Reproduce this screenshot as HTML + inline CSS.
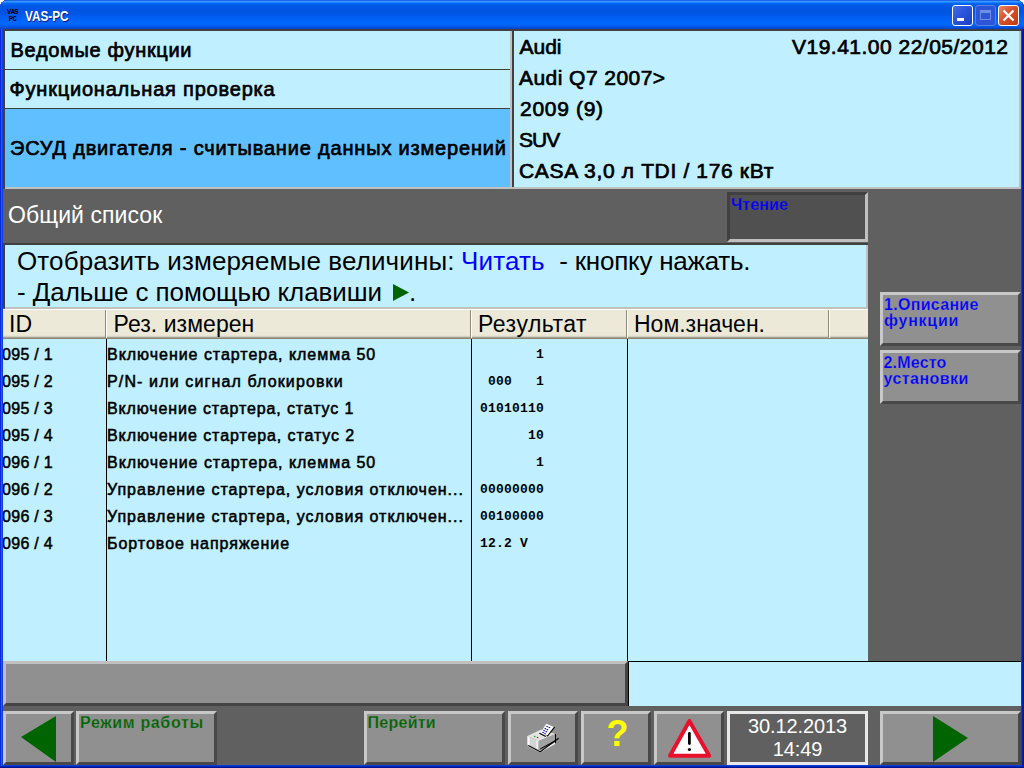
<!DOCTYPE html>
<html lang="ru">
<head>
<meta charset="utf-8">
<title>VAS-PC</title>
<style>
html,body{margin:0;padding:0;}
body{width:1024px;height:768px;overflow:hidden;position:relative;background:#fff;
 font-family:"Liberation Sans",sans-serif;color:#000;}
.abs{position:absolute;box-sizing:border-box;white-space:nowrap;}
pre.abs{white-space:pre;margin:0;}
#win{left:0;top:0;width:1024px;height:768px;background:#0a34d6;border-radius:8px 8px 0 0;box-shadow:inset 0 -1px 0 #001590,inset -1px 0 0 #001590,inset 0 -2px 0 #0028b8,inset -2px 0 0 #0020b0,inset 1px 0 0 #0a2ad8,inset 2px 0 0 #1a5ce8,inset 3px 0 0 #0a40dc,inset -3px 0 0 #0a3ce0,inset 0 -3px 0 #0a3ce0;}
#titlebar{left:0;top:0;width:1024px;height:29px;
 background:linear-gradient(to bottom,#0847d8 0px,#2c86fc 1px,#3c96ff 1.5px,#1a82ff 2.5px,#0468f6 3.5px,#005ae8 5px,#0055e2 9px,#0054e2 12px,#0059ea 15px,#0062f6 19px,#0068ff 23px,#0064f8 25px,#0054e4 27px,#0042cc 29px);
 border-radius:8px 8px 0 0;}
#title{left:24.5px;top:8px;font:bold 14px/16px "Liberation Sans",sans-serif;color:#fff;text-shadow:1px 1px 0 #0a1883;transform:scaleX(0.84);transform-origin:0 0;}
#client{left:3px;top:29px;width:1018px;height:736px;background:#606060;}
.cy{background:#c0f0ff;}
.hl{font:20px/22px "Liberation Sans",sans-serif;letter-spacing:0.7px;-webkit-text-stroke:0.7px #000;}
.hr{font:21px/24px "Liberation Sans",sans-serif;letter-spacing:0.3px;-webkit-text-stroke:0.7px #000;}
.btn{background:#909090;border-style:solid;border-width:3px;border-color:#c8c8c8 #484848 #484848 #c8c8c8;}
.bt{font:bold 16px/16px "Liberation Sans",sans-serif;letter-spacing:0.3px;-webkit-text-stroke:0.25px #909090;}
.cell{font:16px/18px "Liberation Sans",sans-serif;letter-spacing:0.97px;-webkit-text-stroke:0.55px #000;}
.id{font:16px/18px "Liberation Sans",sans-serif;letter-spacing:0.3px;-webkit-text-stroke:0.5px #000;}
.mono{font:bold 13px/14px "Liberation Mono",monospace;letter-spacing:0.2px;}
.ins{font:26px/31px "Liberation Sans",sans-serif;}
.th{font:23px/26px "Liberation Sans",sans-serif;}
.cb{width:21px;height:21px;top:5px;border:1px solid #fff;border-radius:3px;}
</style>
</head>
<body>
<div id="win" class="abs"></div>
<div id="titlebar" class="abs"></div>
<div class="abs" style="left:5px;top:9px;font:bold 7px/7px 'Liberation Mono',monospace;color:#000;text-align:center;width:15px;letter-spacing:-0.5px;">VAS<br>PC</div>
<div id="title" class="abs">VAS-PC</div>
<div class="abs cb" style="left:952px;background:linear-gradient(135deg,#3f6fe8 0%,#2a52d8 50%,#1c3fc0 100%);"></div>
<div class="abs" style="left:957px;top:18px;width:7px;height:3px;background:#fff;"></div>
<div class="abs cb" style="left:975px;background:#2d56d6;border-color:#5d7fe0;"></div>
<div class="abs" style="left:980px;top:10px;width:11px;height:10px;border:1px solid #6f8fe6;border-top-width:3px;"></div>
<div class="abs cb" style="left:998px;background:linear-gradient(135deg,#e8896a 0%,#d8502c 45%,#c23a10 100%);"></div>
<svg class="abs" style="left:998px;top:5px;" width="21" height="21" viewBox="0 0 21 21"><path d="M5.5 5.5 L15.5 15.5 M15.5 5.5 L5.5 15.5" stroke="#fff" stroke-width="2.2" stroke-linecap="butt" fill="none"/></svg>
<div id="client" class="abs"></div>

<!-- top panels -->
<div class="abs" style="left:3px;top:29px;width:1018px;height:160px;background:#404040;"></div>
<div class="abs" style="left:5px;top:187px;width:1016px;height:2px;background:#c0c0c0;"></div>
<div class="abs" style="left:1019px;top:31px;width:2px;height:158px;background:#c0c0c0;"></div>
<div class="abs cy" style="left:5px;top:31px;width:505px;height:38px;"></div>
<div class="abs cy" style="left:5px;top:70px;width:505px;height:38px;"></div>
<div class="abs" style="left:5px;top:109px;width:505px;height:78px;background:#60c0ff;"></div>
<div class="abs" style="left:510px;top:31px;width:2px;height:158px;background:#c0c0c0;"></div>
<div class="abs cy" style="left:514px;top:31px;width:505px;height:156px;"></div>

<div class="abs hl" style="left:10.5px;top:39px;letter-spacing:0.68px;">Ведомые функции</div>
<div class="abs hl" style="left:9.5px;top:78px;letter-spacing:0.8px;">Функциональная проверка</div>
<div class="abs hl" style="left:10px;top:136.5px;letter-spacing:0.82px;">ЭСУД двигателя - считывание данных измерений</div>

<div class="abs hr" style="left:519.5px;top:35px;letter-spacing:0px;">Audi</div>
<div class="abs hr" style="left:792px;top:35px;letter-spacing:0.49px;">V19.41.00 22/05/2012</div>
<div class="abs hr" style="left:519px;top:66px;letter-spacing:0.45px;">Audi Q7 2007&gt;</div>
<div class="abs hr" style="left:520px;top:97px;letter-spacing:0.7px;">2009 (9)</div>
<div class="abs hr" style="left:519px;top:128px;letter-spacing:-1px;">SUV</div>
<div class="abs hr" style="left:519px;top:159px;letter-spacing:0.65px;">CASA 3,0 л TDI / 176 кВт</div>

<!-- list header -->
<div class="abs" style="left:8px;top:202px;font:23px/26px 'Liberation Sans',sans-serif;color:#fff;letter-spacing:0.07px;">Общий список</div>
<div class="abs" style="left:727px;top:192px;width:141px;height:50px;background:#505050;border-style:solid;border-width:3px;border-color:#404040 #c0c0c0 #c0c0c0 #404040;"></div>
<div class="abs bt" style="left:731px;top:197px;color:#0000ff;letter-spacing:0.1px;-webkit-text-stroke-color:#505050;">Чтение</div>

<!-- instruction panel -->
<div class="abs" style="left:3px;top:243px;width:865px;height:2px;background:#404040;"></div>
<div class="abs" style="left:3px;top:245px;width:2px;height:63px;background:#404040;"></div>
<div class="abs cy" style="left:5px;top:245px;width:861px;height:63px;"></div>
<div class="abs" style="left:866px;top:245px;width:2px;height:64px;background:#c0c0c0;"></div>
<div class="abs" style="left:5px;top:307px;width:863px;height:2px;background:#c0c0c0;"></div>
<div class="abs ins" style="left:17px;top:246px;letter-spacing:0.12px;">Отобразить измеряемые величины:</div>
<div class="abs ins" style="left:461px;top:246px;letter-spacing:0.14px;color:#0000ff;">Читать</div>
<div class="abs ins" style="left:559.3px;top:246px;letter-spacing:-0.24px;">- кнопку нажать.</div>
<div class="abs ins" style="left:17px;top:277px;letter-spacing:-0.08px;">- Дальше с помощью клавиши</div>
<div class="abs ins" style="left:409px;top:277px;">.</div>

<!-- table -->
<div class="abs cy" style="left:3px;top:309px;width:865px;height:352px;"></div>
<div class="abs" style="left:3px;top:309px;width:865px;height:30px;background:linear-gradient(to bottom,#fff 0,#fff 1px,#ece9d8 1px,#ece9d8 26px,#e2dfce 27px,#c4c0b0 28px,#8a8676 29px,#8a8676 30px);"></div>
<div class="abs th" style="left:9px;top:311px;">ID</div>
<div class="abs th" style="left:113.5px;top:311px;letter-spacing:0.05px;">Рез. измерен</div>
<div class="abs th" style="left:478px;top:311px;letter-spacing:0.5px;">Результат</div>
<div class="abs th" style="left:634px;top:311px;letter-spacing:0px;">Ном.значен.</div>
<div class="abs" style="left:105px;top:310px;width:2px;height:28px;background:#8e8a7a;border-right:1px solid #fff;"></div>
<div class="abs" style="left:470px;top:310px;width:2px;height:28px;background:#8e8a7a;border-right:1px solid #fff;"></div>
<div class="abs" style="left:626px;top:310px;width:2px;height:28px;background:#8e8a7a;border-right:1px solid #fff;"></div>
<div class="abs" style="left:828px;top:310px;width:2px;height:28px;background:#8e8a7a;border-right:1px solid #fff;"></div>
<div class="abs" style="left:106px;top:339px;width:1px;height:322px;background:#000;"></div>
<div class="abs" style="left:471px;top:339px;width:1px;height:322px;background:#000;"></div>
<div class="abs" style="left:627px;top:339px;width:1px;height:322px;background:#000;"></div>

<div class="abs" style="left:3px;top:338px;width:103px;height:323px;overflow:hidden;">
<div class="abs id" style="left:-1px;top:8px;">095 / 1</div>
<div class="abs id" style="left:-1px;top:35px;">095 / 2</div>
<div class="abs id" style="left:-1px;top:62px;">095 / 3</div>
<div class="abs id" style="left:-1px;top:89px;">095 / 4</div>
<div class="abs id" style="left:-1px;top:116px;">096 / 1</div>
<div class="abs id" style="left:-1px;top:143px;">096 / 2</div>
<div class="abs id" style="left:-1px;top:170px;">096 / 3</div>
<div class="abs id" style="left:-1px;top:197px;">096 / 4</div>
</div>

<div class="abs cell" style="left:107px;top:346px;">Включение стартера, клемма 50</div>
<div class="abs cell" style="left:107px;top:373px;letter-spacing:1.13px;">P/N- или сигнал блокировки</div>
<div class="abs cell" style="left:107px;top:400px;letter-spacing:0.87px;">Включение стартера, статус 1</div>
<div class="abs cell" style="left:107px;top:427px;letter-spacing:0.9px;">Включение стартера, статус 2</div>
<div class="abs cell" style="left:107px;top:454px;">Включение стартера, клемма 50</div>
<div class="abs cell" style="left:107px;top:481px;letter-spacing:1.0px;">Управление стартера, условия отключен...</div>
<div class="abs cell" style="left:107px;top:508px;letter-spacing:1.0px;">Управление стартера, условия отключен...</div>
<div class="abs cell" style="left:107px;top:535px;">Бортовое напряжение</div>

<pre class="abs mono" style="left:480px;top:348px;">       1</pre>
<pre class="abs mono" style="left:480px;top:375px;"> 000   1</pre>
<pre class="abs mono" style="left:480px;top:402px;">01010110</pre>
<pre class="abs mono" style="left:480px;top:429px;">      10</pre>
<pre class="abs mono" style="left:480px;top:456px;">       1</pre>
<pre class="abs mono" style="left:480px;top:483px;">00000000</pre>
<pre class="abs mono" style="left:480px;top:510px;">00100000</pre>
<pre class="abs mono" style="left:480px;top:537px;">12.2 V</pre>

<!-- sidebar buttons -->
<div class="abs btn" style="left:880px;top:292px;width:141px;height:54px;"></div>
<div class="abs bt" style="left:884px;top:297px;color:#0000ff;">1.Описание<br><span style="letter-spacing:0.75px">функции</span></div>
<div class="abs btn" style="left:880px;top:350px;width:141px;height:54px;"></div>
<div class="abs bt" style="left:883.5px;top:355px;color:#0000ff;letter-spacing:0.44px;"><span style="letter-spacing:0.2px">2.Место</span><br>установки</div>

<!-- status bar -->
<div class="abs" style="left:3px;top:661px;width:625px;height:45px;background:#909090;border-style:solid;border-width:3px;border-color:#c0c0c0 #444 #444 #c0c0c0;"></div>
<div class="abs cy" style="left:628px;top:661px;width:393px;height:45px;border-top:1px solid #000;border-left:1px solid #000;"></div>

<!-- bottom toolbar -->
<div class="abs btn" style="left:3px;top:711px;width:71px;height:54px;"></div>
<div class="abs btn" style="left:76px;top:711px;width:141px;height:54px;"></div>
<div class="abs bt" style="left:80px;top:715px;color:#006400;letter-spacing:0.66px;">Режим работы</div>
<div class="abs btn" style="left:364px;top:711px;width:141px;height:54px;"></div>
<div class="abs bt" style="left:367.5px;top:715px;color:#006400;letter-spacing:0.27px;">Перейти</div>
<div class="abs btn" style="left:508px;top:711px;width:70px;height:54px;"></div>
<div class="abs btn" style="left:581px;top:711px;width:70px;height:54px;"></div>
<div class="abs btn" style="left:654px;top:711px;width:70px;height:54px;"></div>
<div class="abs" style="left:727px;top:711px;width:141px;height:54px;background:#606060;border:3px solid #e8e8e8;"></div>
<div class="abs" style="left:727px;top:715px;width:141px;text-align:center;font:20px/22.5px 'Liberation Sans',sans-serif;color:#fff;letter-spacing:-0.1px;">30.12.2013<br>14:49</div>
<div class="abs btn" style="left:880px;top:711px;width:141px;height:54px;"></div>
<div class="abs" style="left:606.5px;top:715px;font:bold 36px/38px 'Liberation Sans',sans-serif;color:#ffff00;">?</div>

<svg class="abs" style="left:0;top:0;" width="1024" height="768" viewBox="0 0 1024 768">
 <polygon points="21,737 56,716 56,762" fill="#006400"/>
 <polygon points="933,716 968,738 933,762" fill="#006400"/>
 <polygon points="393,284 409,292.5 393,301" fill="#006400"/>
 <!-- warning -->
 <path d="M689.4 721 L709.2 755.8 L670 755.8 Z" fill="#fff" stroke="#e8102c" stroke-width="4" stroke-linejoin="round"/>
 <path d="M689.4 733.5 V743.5" stroke="#000" stroke-width="2.8" stroke-linecap="round" fill="none"/>
 <circle cx="689.4" cy="749.5" r="1.6" fill="#000"/>
 <!-- printer -->
 <g stroke-linejoin="round">
  <polygon points="527.5,736 541,729.5 555.5,734 538.5,741" fill="#e4e4e4"/>
  <polygon points="527.5,736 538.5,741 538.5,749.5 527.5,744.5" fill="#d4d4d4"/>
  <polygon points="527.5,736 529.5,737 529.5,745.5 527.5,744.5" fill="#fff"/>
  <polygon points="536.5,740 538.5,741 538.5,749.5 536.5,748.5" fill="#f4f4f4"/>
  <polygon points="538.5,741 555.5,734 555.5,742 538.5,749.5" fill="#a2a2a2"/>
  <polygon points="527.8,744.6 540,750.6 556,742 556,743.6 540,752.4 527.8,746.4" fill="#f4f4f4"/>
  <path d="M528.2 745.6 L540.2 751.8 L558.6 738.2" fill="none" stroke="#000" stroke-width="1.1"/>
  <path d="M540.2 748.9 L555.5 740.6" fill="none" stroke="#000" stroke-width="1"/>
  <path d="M555.5 734 V743.4" fill="none" stroke="#000" stroke-width="1"/>
  <polygon points="546.2,723.7 553.9,726.9 547.3,735.6 540.8,732.4" fill="#fff"/>
  <path d="M554.6 727.2 L547.6 736 L546.6 735.6 M539.4 733.2 L545.8 736.4" fill="none" stroke="#000" stroke-width="1.1"/>
  <path d="M546.4 726.2 l1.4 0.6 M548.6 727.2 l1.6 0.6 M544.6 728.3 l1.4 0.6 M546.6 729.3 l1.6 0.6 M543.4 730.3 l1.4 0.6 M545.6 731.3 l1.6 0.6 M542.4 732.2 l1.4 0.6 M544.4 733.3 l1.4 0.6" stroke="#0a0aa0" stroke-width="1.1" fill="none"/>
  <rect x="533.8" y="735.8" width="1.8" height="1.4" fill="#10d020"/>
  <rect x="536.8" y="736.9" width="1.4" height="1.2" fill="#c01010"/>
 </g>
</svg>
</body>
</html>
